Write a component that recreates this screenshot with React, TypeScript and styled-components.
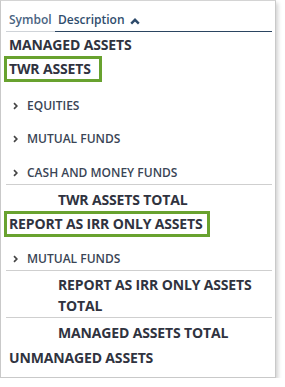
import React from "react";
import styled, { createGlobalStyle } from "styled-components";

const Global = createGlobalStyle`
  html, body { margin: 0; padding: 0; background: #ffffff; }
  body { font-family: "Open Sans", "Noto Sans", sans-serif; }
`;

const Panel = styled.div`
  box-sizing: border-box;
  width: 276px;
  height: 378px;
  border: 1px solid #c9c9c9;
  border-top-color: #d4d4d4;
  background: #fff;
  box-shadow: 2px 3px 4px rgba(0, 0, 0, 0.18);
  padding: 0 3px 0 5px;
  display: flex;
  flex-direction: column;
`;

const Header = styled.div`
  display: grid;
  grid-template-columns: 49px 1fr;
  height: 31px;
  flex: none;
`;

const HeadCell = styled.div<{ $active?: boolean }>`
  display: flex;
  align-items: flex-end;
  gap: 5px;
  padding: 0 0 2px 3px;
  font-size: 12px;
  font-weight: 600;
  color: ${(p) => (p.$active ? "#2f4d6d" : "#4a6482")};
  border-bottom: 1px solid ${(p) => (p.$active ? "#2b4561" : "#cfd3d8")};
  line-height: 18px;
`;

const CaretIcon = styled.svg`
  flex: none;
  margin-bottom: 4px;
`;

const Row = styled.div<{ $h: number; $pt: number; $sep?: boolean }>`
  flex: none;
  box-sizing: border-box;
  height: ${(p) => p.$h}px;
  padding-top: ${(p) => p.$pt}px;
  border-top: ${(p) => (p.$sep ? "1px solid #cfcfcf" : "none")};
  display: flex;
  align-items: flex-start;
`;

const Group = styled.span<{ $indent: number; $width?: number }>`
  display: inline-block;
  margin-left: ${(p) => p.$indent}px;
  font-size: 14px;
  font-weight: 700;
  line-height: 21px;
  color: #30333f;
  letter-spacing: -0.15px;
  ${(p) => (p.$width ? `width: ${p.$width}px;` : "")}
`;

const Boxed = styled(Group)<{ $pr: number }>`
  margin-left: -2px;
  border: 3px solid #68a22f;
  padding: 0 ${(p) => p.$pr}px 0 2px;
  line-height: 20px;
`;

const Sub = styled.span`
  display: flex;
  align-items: center;
  gap: 9px;
  margin-left: 7px;
  font-size: 12px;
  font-weight: 600;
  line-height: 20px;
  color: #3a4555;
`;

const Chevron = () => (
  <svg width="5" height="8" viewBox="0 0 5 8" style={{ flex: "none" }}>
    <path d="M1 1.2 L3.8 4 L1 6.8" fill="none" stroke="#454545" strokeWidth="1.7" />
  </svg>
);

const Caret = () => (
  <CaretIcon width="10" height="7" viewBox="0 0 10 7">
    <path d="M1.2 5.6 L5 1.8 L8.8 5.6" fill="none" stroke="#2d4a6a" strokeWidth="2.4" />
  </CaretIcon>
);

export default function App() {
  return (
    <>
      <Global />
      <Panel>
        <Header>
          <HeadCell>Symbol</HeadCell>
          <HeadCell $active>
            Description <Caret />
          </HeadCell>
        </Header>
        <Row $h={24} $pt={1.5}>
          <Group $indent={3}>MANAGED ASSETS</Group>
        </Row>
        <Row $h={26} $pt={0}>
          <Boxed $indent={3} $pr={8}>TWR ASSETS</Boxed>
        </Row>
        <Row $h={40} $pt={13.5}>
          <Sub><Chevron />EQUITIES</Sub>
        </Row>
        <Row $h={34} $pt={7}>
          <Sub><Chevron />MUTUAL FUNDS</Sub>
        </Row>
        <Row $h={28} $pt={7}>
          <Sub><Chevron />CASH AND MONEY FUNDS</Sub>
        </Row>
        <Row $h={27} $pt={3.5} $sep>
          <Group $indent={52}>TWR ASSETS TOTAL</Group>
        </Row>
        <Row $h={26} $pt={0}>
          <Boxed $indent={3} $pr={4}>REPORT AS IRR ONLY ASSETS</Boxed>
        </Row>
        <Row $h={33} $pt={12}>
          <Sub><Chevron />MUTUAL FUNDS</Sub>
        </Row>
        <Row $h={47} $pt={2.5} $sep>
          <Group $indent={52} $width={212}>REPORT AS IRR ONLY ASSETS TOTAL</Group>
        </Row>
        <Row $h={28} $pt={3.5} $sep>
          <Group $indent={52}>MANAGED ASSETS TOTAL</Group>
        </Row>
        <Row $h={31} $pt={1.5}>
          <Group $indent={3}>UNMANAGED ASSETS</Group>
        </Row>
      </Panel>
    </>
  );
}
